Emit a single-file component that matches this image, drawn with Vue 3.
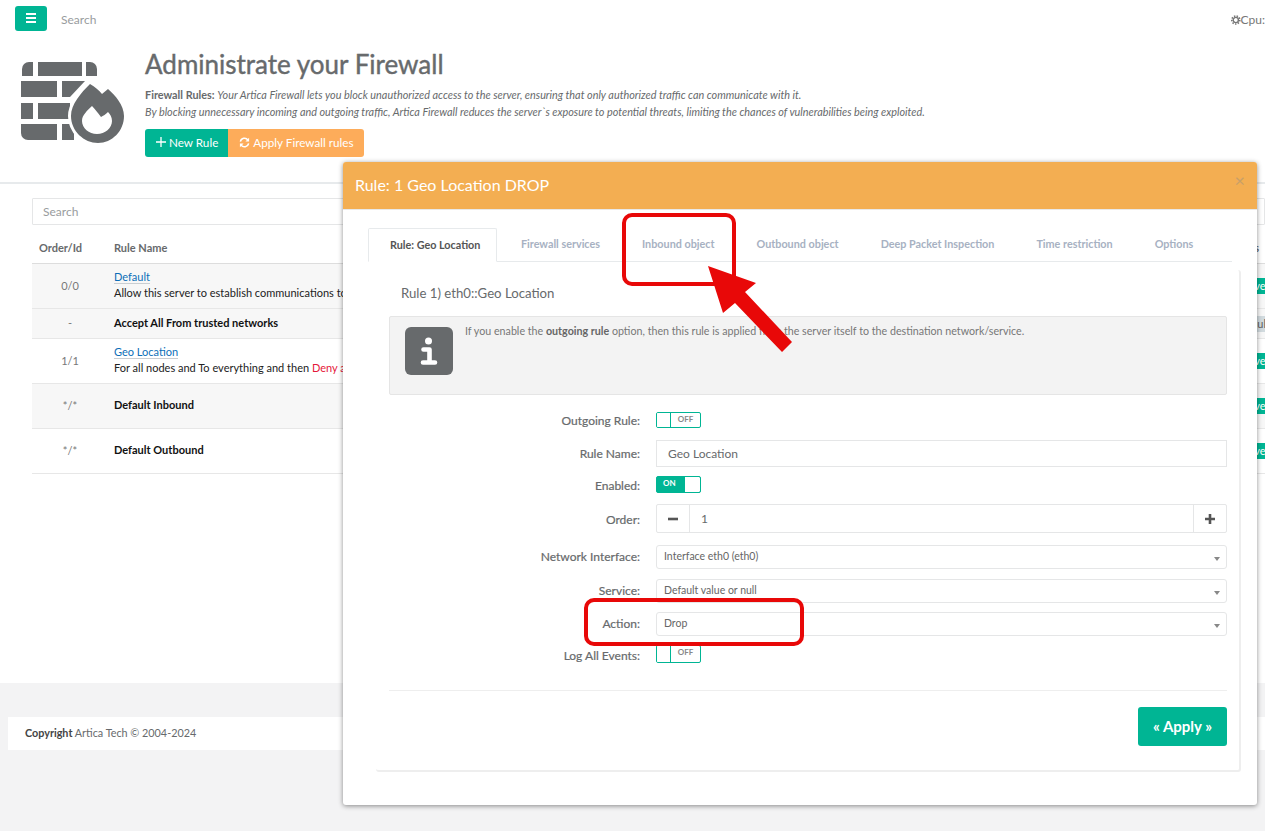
<script setup>
const rows = [
  { id: '0/0', link: 'Default', desc: 'Allow this server to establish communications to', cls: 'striped tall', badge: 'Active' },
  { id: '-', title: 'Accept All From trusted networks', cls: 'striped short', badge: 'Default', gray: true },
  { id: '1/1', link: 'Geo Location', desc: 'For all nodes and To everything and then ', deny: 'Deny access', cls: 'tall', badge: 'Active' },
  { id: '*/*', title: 'Default Inbound', cls: 'striped tall', badge: 'Active' },
  { id: '*/*', title: 'Default Outbound', cls: 'tall', badge: 'Active' }
]
const tabs = ['Firewall services', 'Inbound object', 'Outbound object', 'Deep Packet Inspection', 'Time restriction', 'Options']
</script>

<template>
  <div class="page">
    <div class="content">
      <header class="topbar">
        <button class="burger" aria-label="Menu"><span></span><span></span><span></span></button>
        <span class="top-search">Search</span>
        <span class="cpu">
          <svg width="10" height="10" viewBox="0 0 24 24" fill="none" stroke="#777"><circle cx="12" cy="12" r="10" stroke-width="4" stroke-dasharray="3.6 3.25"/><circle cx="12" cy="12" r="6.5" stroke-width="3.6"/></svg>Cpu:
        </span>
      </header>

      <section class="hero">
        <svg class="wall" width="110" height="90" viewBox="0 0 110 90">
          <g fill="#676a6c">
            <path d="M1 16V9a7 7 0 0 1 7-7h4v14z"/>
            <rect x="17" y="2" width="44" height="14"/>
            <path d="M65 2h4a7 7 0 0 1 7 7v7H65z"/>
            <rect x="0" y="21" width="36" height="16"/>
            <path d="M41 21h23L49 37h-8z"/>
            <rect x="0" y="43" width="12" height="16"/>
            <rect x="17" y="43" width="32" height="16"/>
            <path d="M0 64h36v16H7a7 7 0 0 1-7-7z"/>
            <rect x="41" y="64" width="12" height="16"/>
          </g>
          <path fill="#676a6c" stroke="#fff" stroke-width="6" paint-order="stroke" d="M69 24c5 3 9 6 12 10 2-2 4-3 6-5 7 6 16 16 16 27 0 15-12 27-26 27S50 71 50 56c0-12 10-23 19-32z"/>
          <path fill="#fff" d="M71 46c3 3 6 7 9 11 2-1 5-3 7-5 2 2 4 5 4 9 0 7-7 13-15 13s-15-6-15-13c0-6 5-10 10-15z"/>
        </svg>
        <div class="hero-text">
          <h1>Administrate your Firewall</h1>
          <p><b>Firewall Rules:</b> <i>Your Artica Firewall lets you block unauthorized access to the server, ensuring that only authorized traffic can communicate with it.</i></p>
          <p><i>By blocking unnecessary incoming and outgoing traffic, Artica Firewall reduces the server`s exposure to potential threats, limiting the chances of vulnerabilities being exploited.</i></p>
          <div class="hero-btns">
            <button class="btn green">
              <svg width="10" height="10" viewBox="0 0 10 10"><path d="M5 0v10M0 5h10" stroke="#fff" stroke-width="1.3"/></svg>
              New Rule
            </button>
            <button class="btn orange">
              <svg width="11" height="11" viewBox="0 0 12 12" fill="none" stroke="#fff" stroke-width="1.6"><path d="M1.5 5A4.6 4.6 0 0 1 9.8 3.4"/><path d="M10.5 7A4.6 4.6 0 0 1 2.2 8.6"/><path fill="#fff" stroke="none" d="M11 .8v4H7zM1 11.2v-4h4z"/></svg>
              Apply Firewall rules
            </button>
          </div>
        </div>
      </section>

      <section class="table-area">
        <div class="table-search">Search</div>
        <div class="thead">
          <span class="c-id">Order/Id</span>
          <span class="c-name">Rule Name</span>
          <span class="c-end">Status</span>
        </div>
        <div v-for="r in rows" :key="r.link || r.title" class="row" :class="r.cls">
          <span class="c-id">{{ r.id }}</span>
          <div class="c-name">
            <template v-if="r.link">
              <a class="rule-link">{{ r.link }}</a>
              <div class="rule-desc">{{ r.desc }}<span v-if="r.deny" class="deny">{{ r.deny }}</span></div>
            </template>
            <b v-else class="rule-title">{{ r.title }}</b>
          </div>
          <span class="c-badge"><span class="badge" :class="{ gray: r.gray }">{{ r.badge }}</span></span>
        </div>
      </section>
    </div>

    <footer class="footer"><b>Copyright</b> Artica Tech © 2004-2024</footer>

    <div class="modal">
      <div class="modal-head">
        <span>Rule: 1 Geo Location DROP</span>
        <span class="close">×</span>
      </div>
      <div class="modal-body">
        <div class="tabs">
          <span class="tab active">Rule: Geo Location</span>
          <span v-for="t in tabs" :key="t" class="tab">{{ t }}</span>
        </div>
        <div class="panel">
          <h3>Rule 1) eth0::Geo Location</h3>
          <div class="callout">
            <svg class="info" width="48" height="48" viewBox="0 0 48 48">
              <rect width="48" height="48" rx="6" fill="#676a6c"/>
              <circle cx="23.5" cy="14" r="3.5" fill="#fff"/>
              <path d="M18.5 22.5h6v11M18 35.5h12" fill="none" stroke="#fff" stroke-width="4.6" stroke-linecap="round" stroke-linejoin="round"/>
            </svg>
            <p>If you enable the <b>outgoing rule</b> option, then this rule is applied from the server itself to the destination network/service.</p>
          </div>

          <div class="form">
            <div class="frow r1">
              <label class="p1">Outgoing Rule:</label>
              <div class="switch off"><span class="knob"></span><span class="sw-txt">OFF</span></div>
            </div>
            <div class="frow r2">
              <label>Rule Name:</label>
              <div class="input">Geo Location</div>
            </div>
            <div class="frow r3">
              <label class="p2">Enabled:</label>
              <div class="switch on"><span class="sw-txt">ON</span><span class="knob"></span></div>
            </div>
            <div class="frow r4">
              <label class="p2">Order:</label>
              <div class="stepper">
                <span class="step"><svg width="12" height="12" viewBox="0 0 12 12"><path d="M1 6h10" stroke="#555" stroke-width="2.6"/></svg></span>
                <span class="step-val">1</span>
                <span class="step end"><svg width="12" height="12" viewBox="0 0 12 12"><path d="M1 6h10M6 1v10" stroke="#555" stroke-width="2.6"/></svg></span>
              </div>
            </div>
            <div class="frow r5">
              <label class="up">Network Interface:</label>
              <div class="select">Interface eth0 (eth0)<i></i></div>
            </div>
            <div class="frow r6">
              <label class="up">Service:</label>
              <div class="select">Default value or null<i></i></div>
            </div>
            <div class="frow r7">
              <label class="up">Action:</label>
              <div class="select">Drop<i></i></div>
            </div>
            <div class="frow r8">
              <label class="p3">Log All Events:</label>
              <div class="switch off"><span class="knob"></span><span class="sw-txt">OFF</span></div>
            </div>
          </div>

          <div class="actions">
            <button class="apply">« Apply »</button>
          </div>
        </div>
      </div>
    </div>

    <div class="mark mark-tab"></div>
    <div class="mark mark-action"></div>
    <svg class="arrow" width="100" height="100" viewBox="700 260 100 100">
      <path fill="#e80808" d="M708 266l48 17-11 9 47 50-10 10-47-49-12 10z"/>
    </svg>
  </div>
</template>

<style>
html, body { margin: 0; background: #f3f3f4; }
</style>

<style scoped>
* { box-sizing: border-box; }
.page {
  position: relative;
  width: 1265px;
  height: 831px;
  overflow: hidden;
  background: #f3f3f4;
  font-family: Lato, "Liberation Sans", sans-serif;
  font-size: 12px;
  color: #676a6c;
}
.content { height: 683px; background: #fff; }
.topbar { height: 40px; display: flex; align-items: flex-start; padding-left: 15px; }
.burger {
  width: 32px; height: 25px; margin-top: 6px; border: 0; border-radius: 3px;
  background: #00b594; display: flex; flex-direction: column; align-items: center;
  justify-content: center; gap: 2px; padding: 0 0 2px;
}
.burger span { width: 10px; height: 2px; background: #fff; }
.top-search { margin: 12px 0 0 14px; color: #999c9e; }
.cpu { margin: 12px 0 0 auto; display: flex; align-items: center; color: #777; white-space: nowrap; width: 34px; }
.hero { height: 144px; border-bottom: 2px solid #e7eaec; display: flex; padding-left: 21px; }
.wall { margin-top: 20px; flex: none; }
.hero-text { margin-left: 14px; margin-top: 8px; }
h1 { margin: 0 0 6px; font-size: 26px; line-height: 32px; font-weight: 400; color: #676a6c; -webkit-text-stroke: .4px #676a6c; }
.hero-text p { margin: 0; font-size: 10.85px; line-height: 17px; color: #676a6c; white-space: nowrap; }
.hero-btns { display: flex; margin-top: 9px; }
.btn {
  height: 28px; border: 0; color: #fff; font: 11.7px Lato, sans-serif; display: flex;
  align-items: center; gap: 3px; padding: 0 10px 2px 11px;
}
.btn.green { background: #00b594; border-radius: 3px 0 0 3px; }
.btn.orange { background: #fdac5a; border-radius: 0 3px 3px 0; }
.table-area { padding: 14px 0 0 32px; }
.table-search {
  height: 27px; border: 1px solid #e5e6e7; border-radius: 1px; padding: 0 10px;
  line-height: 25px; color: #999c9e; margin-bottom: 10px;
}
.thead, .row { display: flex; align-items: center; border-bottom: 1px solid #e7e7e7; }
.thead { height: 29px; font-weight: 700; border-color: #ddd; font-size: 11px; padding-bottom: 3px; }
.row { font-size: 11px; }
.row.short { height: 30px; }
.row.tall { height: 45px; }
.striped { background: #f7f7f7; }
.c-id { width: 82px; flex: none; }
.thead .c-id { padding-left: 7px; }
.row .c-id { text-align: center; padding: 0 6px 2px 0; color: #777; }
.c-name { flex: 1; padding-bottom: 4px; }
.thead .c-name { padding-bottom: 0; }
.row.short .c-name { padding-bottom: 2px; }
.c-end { width: 8px; padding-right: 6px; flex: none; white-space: nowrap; direction: rtl; }
.c-badge { width: 8px; flex: none; display: flex; justify-content: flex-start; overflow: hidden; }
.badge {
  background: #00b594; color: #fff; font-size: 11px; line-height: 16px; flex: none;
  padding: 0 2px 0 0; margin-left: -22px;
}
.badge.gray { background: #d1dade; color: #5e5e5e; margin-left: -23px; }
.rule-link { color: #0c6fb8; border-bottom: 1px solid #c9ced2; line-height: 13px; display: inline-block; }
.rule-desc { color: #222; white-space: nowrap; margin-top: 2px; }
.deny { color: #e5173a; }
.rule-title { color: #111; }
.footer {
  margin: 34px 0 0 8px; height: 33px; background: #fff; padding-left: 17px;
  line-height: 32px; font-size: 10.8px; color: #676a6c;
}
.footer b { color: #444; }

.modal {
  position: absolute; left: 343px; top: 162px; width: 914px; height: 643px;
  background: #fff; border-radius: 3px; box-shadow: 0 1px 5px rgba(0,0,0,.45);
}
.modal-head {
  height: 48px; background: #f3ae52; color: #fff; font-size: 16px; display: flex;
  align-items: center; justify-content: space-between; padding: 0 12px 2px 12px;
  border-radius: 3px 3px 0 0; border-bottom: 1px solid #e8e8e8;
}
.close { font-size: 18px; color: #c8a069; line-height: 1; margin-top: -10px; }
.modal-body { padding: 18px 0 0 25px; }
.tabs { display: flex; width: 864px; height: 34px; border-bottom: 1px solid #e7eaec; }
.tab {
  padding: 0 21px; line-height: 32px; font-size: 10.8px; font-weight: 700;
  color: #a7b1c2; white-space: nowrap; height: 34px;
}
.tab.active {
  color: #555; background: #fff; border: 1px solid #e7eaec; border-bottom-color: #fff;
  border-radius: 2px 2px 0 0; margin-right: 2.5px; padding: 0 16px 0 21px;
}
.panel {
  margin: 8px 0 0 8px; width: 865px; height: 502px; padding: 13px 12px 0 13px;
  border-right: 2px solid #eee; border-bottom: 2px solid #eee; border-radius: 3px;
}
h3 { margin: 0 0 0 12px; font-size: 13.2px; font-weight: 400; line-height: 20px; color: #676a6c; }
.callout {
  height: 79px; margin-top: 13px; background: #f3f3f3; border: 1px solid #e5e5e5;
  border-radius: 2px; display: flex; padding: 10px 15px;
}
.info { flex: none; }
.callout p { margin: -1px 0 0 12px; font-size: 10.7px; line-height: 9px; color: #777; }
.callout b { color: #666; }
.form { margin-top: 17px; border-bottom: 1px solid #eee; height: 279px; }
.frow { display: grid; grid-template-columns: 251px 1fr; column-gap: 16px; align-items: center; }
.frow label { text-align: right; color: #676a6c; -webkit-text-stroke: .2px #676a6c; }
.frow label.p1 { padding-top: 1px; }
.frow label.p2 { padding-top: 2px; }
.frow label.p3 { padding-top: 3px; }
.frow label.up { margin-top: -1px; }
.r1 { height: 15px; }
.r2 { margin-top: 13px; height: 27px; }
.r3 { margin-top: 9px; height: 16px; }
.r4 { margin-top: 12px; height: 29px; }
.r5 { margin-top: 12px; height: 24px; }
.r6 { margin-top: 10px; height: 24px; }
.r7 { margin-top: 9px; height: 24px; }
.r8 { margin-top: 9px; height: 15px; }
.switch {
  width: 45px; height: 100%; border: 1px solid #00b594; border-radius: 2px; display: flex;
  font-size: 8px; font-weight: 700; line-height: 13px; overflow: hidden;
}
.switch.off .knob { width: 14px; border-right: 1px solid #00b594; background: #fff; }
.switch.off .sw-txt { flex: 1; text-align: center; color: #888; }
.switch.on { background: #00b594; }
.switch.on .sw-txt { flex: 1; padding-left: 6px; color: #fff; }
.switch.on .knob { width: 15px; background: #fff; border-radius: 0 1px 1px 0; }
.input {
  height: 27px; border: 1px solid #e5e6e7; padding: 0 11px; line-height: 25px; color: #676a6c;
}
.stepper { display: flex; height: 29px; border: 1px solid #e5e6e7; border-radius: 2px; }
.step { width: 33px; display: flex; align-items: center; justify-content: center; flex: none; border-right: 1px solid #e5e6e7; }
.step.end { border-right: 0; border-left: 1px solid #e5e6e7; }
.step-val { flex: 1; padding-left: 11px; line-height: 27px; }
.select {
  position: relative; height: 24px; border: 1px solid #e5e6e7; border-radius: 3px;
  padding-left: 7px; font-size: 10.5px; line-height: 20px; color: #666;
}
.select i {
  position: absolute; right: 6px; top: 11px; border: 3px solid transparent;
  border-top: 4px solid #888; border-bottom: 0;
}
.actions { display: flex; justify-content: flex-end; margin-top: 16px; }
.apply {
  width: 89px; height: 39px; background: #00b594; color: #fff; border: 0; border-radius: 3px;
  font: 700 15px Lato, sans-serif; padding: 0 0 2px;
}
.mark { position: absolute; border: 4px solid #e80808; border-radius: 10px; }
.mark-tab { left: 622px; top: 213px; width: 114px; height: 73px; }
.mark-action { left: 584px; top: 598px; width: 220px; height: 48px; }
.arrow { position: absolute; left: 700px; top: 260px; }
</style>
